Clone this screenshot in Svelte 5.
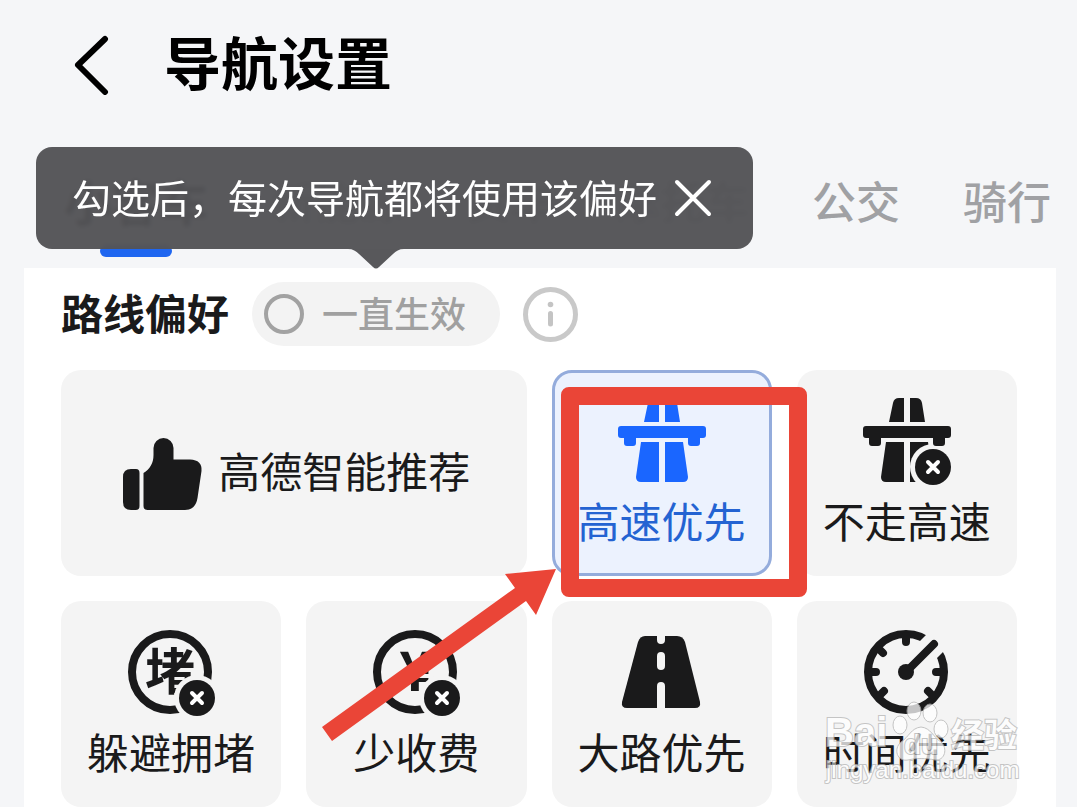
<script>
    const TABS = ['小客车', '新能源', '货车', '摩托车', '公交', '骑行'];
    const PREFERENCES = [
        { id: 'smart', label: '高德智能推荐' },
        { id: 'highway', label: '高速优先' },
        { id: 'no_highway', label: '不走高速' },
        { id: 'avoid_jam', label: '躲避拥堵' },
        { id: 'less_fee', label: '少收费' },
        { id: 'main_road', label: '大路优先' },
        { id: 'time', label: '时间优先' }
    ];

    let active_tab = '小客车';
    let selected = 'highway';
    let always_on = false;
    let show_tip = true;
</script>

<main>
    <header>
        <button class="back" aria-label="返回">
            <svg width="36" height="60" viewBox="0 0 36 60">
                <path d="M31 4 L4 30 L31 57" fill="none" stroke="#000" stroke-width="6" stroke-linecap="round" stroke-linejoin="round" />
            </svg>
        </button>
        <h1>导航设置</h1>
    </header>

    <nav>
        {#each TABS as tab}
            <button class="tab" class:active={tab === active_tab} on:click={() => active_tab = tab}>{tab}</button>
        {/each}

        {#if show_tip}
            <div class="tip">
                <span>勾选后，每次导航都将使用该偏好</span>
                <button aria-label="关闭" on:click={() => show_tip = false}>
                    <svg width="38" height="38" viewBox="0 0 38 38">
                        <path d="M3 3 L35 35 M35 3 L3 35" stroke="#fff" stroke-width="4" stroke-linecap="round" />
                    </svg>
                </button>
                <svg class="tail" width="56" height="21" viewBox="0 0 56 21">
                    <path d="M0 0 C5 0 8 2 11 5 L25 18 Q28 21 31 18 L45 5 C48 2 51 0 56 0 Z" fill="#58585b" />
                </svg>
            </div>
        {/if}
    </nav>

    <section class="card">
        <div class="card_head">
            <h2>路线偏好</h2>
            <label class="always">
                <input type="checkbox" bind:checked={always_on} />
                <span>一直生效</span>
            </label>
            <button class="info" aria-label="说明">
                <svg width="55" height="55" viewBox="0 0 55 55">
                    <circle cx="27.5" cy="27.5" r="25" fill="none" stroke="#c9c9c9" stroke-width="5" />
                    <circle cx="27.5" cy="17.5" r="2.8" fill="#c4c4c4" />
                    <path d="M27.5 26.500 V37" stroke="#c4c4c4" stroke-width="5" stroke-linecap="round" />
                </svg>
            </button>
        </div>

        <div class="grid">
            {#each PREFERENCES as item}
                <div class="cell" class:wide={item.id === 'smart'} class:marked={item.id === 'highway'}>
                    <button class="tile" class:selected={item.id === selected} on:click={() => selected = item.id}>
                        {#if item.id === 'smart'}
                            <svg width="80" height="72" viewBox="0 0 80 72" fill="currentColor">
                                <path d="M8 31 H13 Q16.500 31 16.500 35 V68 Q16.500 72 13 72 H8 Q0 72 0 64 V39 Q0 31 8 31 Z" />
                                <path d="M24.500 72 Q20.500 72 20.500 68 V35 C27 31 30.500 25 30.500 17 V10 A10 10 0 0 1 50.500 10 V21.500 H67 Q79.500 22 78.500 33 L74.500 60 Q72.500 72 62 72 Z" />
                            </svg>
                        {:else}
                            <svg width="88" height="88" viewBox="0 0 88 88" fill="currentColor">
                                {#if item.id === 'avoid_jam'}
                                    <circle cx="43" cy="43" r="38" fill="none" stroke="currentColor" stroke-width="8" />
                                    <text class="mark" x="43" y="61" font-size="50">堵</text>
                                {:else if item.id === 'less_fee'}
                                    <circle cx="43" cy="43" r="38" fill="none" stroke="currentColor" stroke-width="8" />
                                    <text class="mark" x="43" y="62" font-size="54">¥</text>
                                {:else if item.id === 'main_road'}
                                    <path d="M27 7 H59 Q65 7 67 13 L82 73 Q83 79 77 79 H9 Q3 79 4 73 L20 13 Q22 7 27 7 Z" />
                                    <path class="cut" d="M39 6 H47 V11 A4 4 0 0 1 39 11 Z M39 27 A4 4 0 0 1 47 27 V37 A4 4 0 0 1 39 37 Z M39 57 A4 4 0 0 1 47 57 V80 H39 Z" />
                                {:else if item.id === 'time'}
                                    <g fill="none" stroke="currentColor" stroke-width="8" stroke-linecap="round">
                                        <circle cx="43" cy="43" r="38" />
                                        <path class="cut_line" d="M61 25 L78 8" />
                                        <path d="M43 7 V13 M7 43 H13 M73 43 H79 M17 21 L20 24 M17 66 L21 62 M69 66 L65 62 M43 43 L71 15" />
                                    </g>
                                    <circle cx="43" cy="43" r="8" />
                                {:else}
                                    <path d="M41 0 H36 Q31 0 30 5 L26 24 H41 Z M47 0 H53 Q58 0 59 5 L62 24 H47 Z" />
                                    <path d="M23 44 H41 V84 H23 Q18 84 18 79 Z M47 44 H65 L70 79 Q70 84 65 84 H47 Z" />
                                {/if}

                                {#if ['no_highway', 'avoid_jam', 'less_fee'].includes(item.id)}
                                    <circle class="cut" cx="70" cy="69" r="23" />
                                    <circle cx="70" cy="69" r="18" />
                                    <path d="M65 64 L75 74 M75 64 L65 74" stroke="#fff" stroke-width="4" stroke-linecap="round" />
                                {/if}

                                {#if item.id === 'highway' || item.id === 'no_highway'}
                                    <path d="M3 28 H85 Q88 28 88 31 V37 Q88 40 85 40 H82 V45 Q82 48 79 48 H73 Q70 48 70 45 V40 H18 V45 Q18 48 15 48 H9 Q6 48 6 45 V40 H3 Q0 40 0 37 V31 Q0 28 3 28 Z" />
                                {/if}
                            </svg>
                        {/if}
                        <span>{item.label}</span>
                    </button>
                    {#if item.id === 'highway'}
                        <div class="frame"></div>
                        <svg class="arrow" width="234" height="172" viewBox="0 0 234 172">
                            <path d="M0 158 L193 19 L183 5 L234 0 L214 46 L204 32 L10 172 Z" fill="#ea4537" />
                        </svg>
                    {/if}
                </div>
            {/each}
        </div>

        <!-- site stamp over the bottom right corner -->
        <svg class="stamp" width="200" height="100" viewBox="0 0 200 100">
            <g fill="#fff" stroke="#b4b4b4" stroke-width="1">
                <ellipse cx="76" cy="35" rx="7" ry="9" />
                <ellipse cx="90" cy="21" rx="7" ry="9" />
                <ellipse cx="106" cy="23" rx="7" ry="9" />
                <ellipse cx="117" cy="39" rx="7" ry="9" />
                <path d="M97 37 C107 38 109 47 117 52 C124 58 121 71 111 70 C102 68 92 68 84 70 C73 72 69 59 77 52 C85 47 87 38 97 37 Z" />
                <g paint-order="stroke" stroke-width="2">
                    <text x="1" y="56" font-size="40">Bai</text>
                    <text x="80" y="64" font-size="28">du</text>
                    <text x="127" y="57" font-size="33">经验</text>
                    <text class="url" x="2" y="88" font-size="24">jingyan.baidu.com</text>
                </g>
            </g>
        </svg>
    </section>
</main>

<style>
    :global(body) {
        background: #f5f6f8;
    }

    main {
        display: flex;
        flex-direction: column;
        min-height: 100vh;
        overflow: hidden;
        font-family: "Noto Sans CJK SC", sans-serif;
        color: #1a1a1b;
    }

    button {
        padding: 0;
        border: 0;
        background: none;
        font: inherit;
        color: inherit;
        cursor: pointer;
    }

    svg {
        display: block;
        flex: none;
    }

    header {
        display: flex;
        align-items: center;
        gap: 54px;
        padding: 20px 74px 0;
    }

    h1 {
        margin: 0;
        padding-bottom: 10px;
        font-size: 57px;
        line-height: 80px;
        font-weight: 700;
        color: #000;
    }

    nav {
        position: relative;
        z-index: 1;
        display: flex;
        gap: 63px;
        height: 87px;
        margin: 60px 0 11px;
        padding-left: 64px;
    }

    .tab {
        position: relative;
        flex: none;
        font-size: 44px;
        line-height: 60px;
        height: 60px;
        font-weight: 500;
        color: #a0a1a4;
        white-space: nowrap;
    }

    .tab.active {
        font-size: 48px;
        font-weight: 700;
        color: #000;
    }

    .tab.active::after {
        content: '';
        position: absolute;
        left: 50%;
        top: 75px;
        width: 72px;
        height: 12px;
        margin-left: -36px;
        border-radius: 6px;
        background: #1f66f0;
    }

    .tip {
        position: absolute;
        left: 36px;
        top: -23px;
        display: flex;
        align-items: center;
        gap: 17px;
        height: 102px;
        padding: 0 41px 0 36px;
        border-radius: 16px;
        background: rgba(84, 84, 87, .97);
        backdrop-filter: blur(2px);
        color: #fff;
        font-size: 39px;
        line-height: 60px;
        white-space: nowrap;
    }

    .tip span {
        padding-bottom: 4px;
    }

    .tail {
        position: absolute;
        left: 312px;
        top: 100%;
    }

    .card {
        position: relative;
        flex: 1;
        margin: 0 21px 0 24px;
        padding: 14px 39px 0 37px;
        background: #fff;
    }

    .card_head {
        display: flex;
        align-items: center;
        gap: 23px;
        margin-bottom: 24px;
    }

    h2 {
        margin: 0;
        padding-bottom: 4px;
        font-size: 42px;
        line-height: 60px;
        font-weight: 700;
    }

    .always {
        display: flex;
        align-items: center;
        gap: 18px;
        height: 64px;
        padding: 0 34px 0 12px;
        border-radius: 32px;
        background: #f3f3f3;
        font-size: 36px;
        font-weight: 500;
        color: #a0a0a0;
    }

    .always span {
        padding-bottom: 4px;
    }

    .always input {
        appearance: none;
        box-sizing: border-box;
        width: 40px;
        height: 40px;
        margin: 0;
        border: 4px solid #a2a2a2;
        border-radius: 50%;
    }

    .always input:checked {
        background: #1f66f0;
    }

    .grid {
        display: grid;
        grid-template-columns: repeat(4, 1fr);
        grid-auto-rows: 206px;
        gap: 25px;
    }

    .cell {
        position: relative;
    }

    .wide {
        grid-column: span 2;
    }

    .marked {
        z-index: 1;
    }

    .tile {
        display: flex;
        flex-direction: column;
        align-items: center;
        justify-content: center;
        gap: 4px;
        width: 100%;
        height: 100%;
        padding-top: 2px;
        border-radius: 20px;
        background: #f4f4f4;
        font-size: 42px;
        line-height: 60px;
        white-space: nowrap;
    }

    .wide .tile {
        flex-direction: row;
        gap: 15px;
        padding-left: 6px;
    }

    .wide span {
        padding-bottom: 8px;
    }

    .tile.selected {
        border: 3px solid #94acdc;
        background: #ecf2fe;
        color: #1a66ff;
    }

    .tile.selected span {
        color: #2463d2;
    }

    .mark {
        font-weight: 700;
        text-anchor: middle;
    }

    .cut {
        fill: #f4f4f4;
    }

    .cut_line {
        stroke: #f4f4f4;
        stroke-width: 24px;
        stroke-linecap: butt;
    }

    .frame {
        position: absolute;
        left: 9px;
        top: 17px;
        right: -35px;
        bottom: -21px;
        border: 18px solid #ea4537;
        border-radius: 8px;
        pointer-events: none;
    }

    .arrow {
        position: absolute;
        left: -230px;
        top: 199px;
        pointer-events: none;
    }

    .stamp {
        position: absolute;
        right: 32px;
        bottom: 17px;
        opacity: .75;
        font-family: "Liberation Sans", "Noto Sans CJK SC", sans-serif;
        font-weight: 700;
        pointer-events: none;
    }

    .url {
        font-weight: 400;
    }
</style>
